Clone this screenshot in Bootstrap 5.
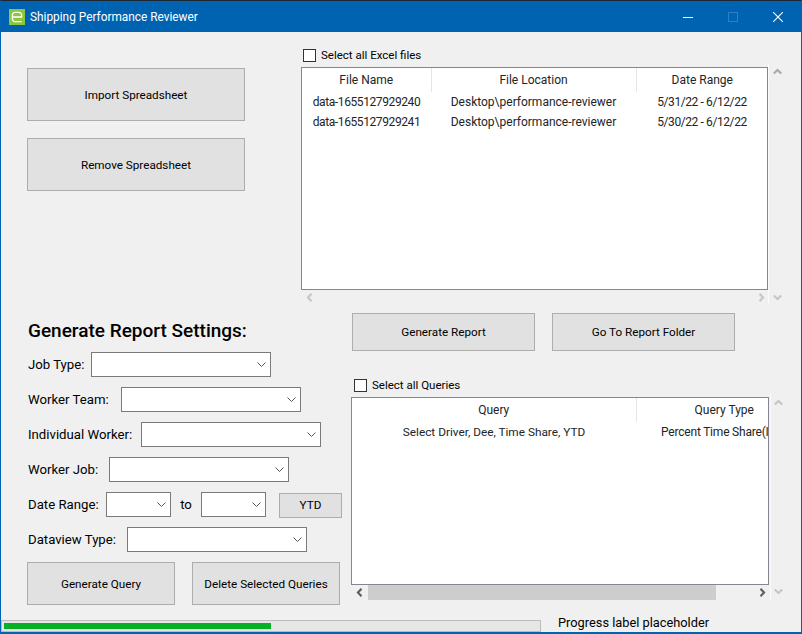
<!DOCTYPE html>
<html lang="en">
<head>
<meta charset="utf-8">
<title>Shipping Performance Reviewer</title>
<link href="https://cdn.jsdelivr.net/npm/bootstrap@5.3.0/dist/css/bootstrap.min.css" rel="stylesheet">
<style>
html,body{margin:0;height:634px;overflow:hidden;background:#f0f0f0}
body{font-family:Roboto,"Noto Sans",sans-serif;font-size:12px;line-height:16px;color:#000}
.app-window{width:802px;height:634px;background:#f0f0f0;border-left:1px solid #0063b1;border-right:1px solid #0063b1;border-bottom:2px solid #0063b1;border-top:1px solid #1b2733;overflow:hidden}
.title-strip{height:31px;margin:0 -1px;background:#0063b1;color:#fff;flex:none}
.app-logo{width:16px;height:16px;margin-left:9px;margin-right:5px}
.title-text{font-size:11.85px}
.win-ctl{width:46px;height:31px}
.ctl-max{width:44px}
.ctl-close{margin-left:-1px}
.ctl-row{margin-right:1px}
.win-btn.btn{background:#e1e1e1;border:1px solid #adadad;border-radius:0;color:#000;font-size:11.7px;line-height:16px;padding:0;display:flex;align-items:center;justify-content:center}
.w-218{width:218px}.h-53{height:53px}
.w-183{width:183px}.h-38{height:38px}
.w-148{width:148px}.h-43{height:43px}
.w-63b{width:63px;height:25px}
.top-zone{height:281px;flex:none}
.left-top{width:218px;margin-left:26px;margin-top:36px;gap:17px}
.right-top{margin-left:56px;margin-top:15px}
.chk-row{height:16px;gap:5px;font-size:11.5px}
.form-check-input.win-chk{width:13px;height:13px;margin:0 0 0 2px;border:1px solid #333;border-radius:0;background-color:#fff;flex:none}
.list-one{width:467px;height:223px;margin-top:4px}
.list-two{width:418px;height:188px;margin-top:4px;margin-left:-1px}
.win-list{background:#fff;border:1px solid #828790;overflow:hidden;flex:none}
.win-table{table-layout:fixed;margin:0;--bs-table-bg:transparent;border-collapse:collapse;font-size:12px}
.win-table th,.win-table td{border:0;padding:0;text-align:center;white-space:nowrap;overflow:hidden;font-weight:400;line-height:16px;box-shadow:none;background:transparent}
.win-table thead th{height:24px;border-right:1px solid #e5e5e5;vertical-align:middle}
.win-table thead th:last-child{border-right:0}
.win-table tbody td{height:20px;vertical-align:middle}
.win-table td.tight-num{letter-spacing:-.4px}
.win-table td.tight-text{font-size:11.8px}
.tbl-one{width:466px}
.c-130{width:129px}.c-205{width:205px}.c-131{width:132px}
.tbl-two{width:460px}
.c-285{width:284px}.c-175{width:176px}
.win-table td.cell-clip{text-align:left;padding-left:25px;letter-spacing:-.2px}
.sb-h{height:15px;flex:none}
.sb-one{width:467px}
.sb-two{width:418px;margin-left:-1px}
.sb-thumb{width:348px;height:15px;background:#cdcdcd;margin-left:5px}
.sb-arrow{width:9px;height:7px;display:block}
.sb-arrow-v{width:7px;height:9px;display:block}
.ar-l{margin-left:5px}
.ar-r{margin-left:auto;margin-right:3px}
.v-col{width:33px;flex:none;border-left:1px solid #fbfbfb}
.v-top{padding:5px 0 0 4px}
.v-bot{padding:0 0 4px 4px;margin-top:auto}
.v-top2{padding:6px 0 0 3px}
.v-bot2{padding:0 0 5px 3px;margin-top:auto}
.ar-path{fill:none;stroke-width:2.2}
.ar-dark{stroke:#606060}
.ar-mid{stroke:#a9a9a9}
.ar-pale{stroke:#c6c6c6}
.mid-zone{flex:1;min-height:0}
.left-form{width:340px;margin-left:27px;margin-top:6px;flex:none}
.form-title{font-size:19px;line-height:24px;font-weight:500;margin:0 0 9px;height:24px}
.form-line{height:25px;margin-bottom:10px;font-size:13.2px}
.lbl-63{width:63px}.lbl-93{width:93px}.lbl-113{width:113px}.lbl-81{width:81px}.lbl-78{width:78px}.lbl-99{width:99px}
.form-select.win-sel{width:180px;height:25px;padding:0 4px;border:1px solid #7a7a7a;border-radius:0;font-size:12px;background-color:#fff;background-image:url("data:image/svg+xml,%3csvg xmlns='http://www.w3.org/2000/svg' viewBox='0 0 9 5'%3e%3cpath d='M.5.5l4 4 4-4' fill='none' stroke='%23555'/%3e%3c/svg%3e");background-position:right 4px center;background-size:9px 5px;flex:none}
.form-select.win-sel-s{width:65px}
.to-lbl{width:30px;text-align:center}
.ytd-gap{margin-left:13px}
.ytd-y{margin-top:1px}
.btn-pair{gap:17px;margin-top:1px;margin-left:-1px;width:320px}
.right-mid{margin-left:-16px}
.btn-duo{gap:17px}
.chk-two{margin-top:26px}
.right-stack{width:418px}
.foot-zone{height:12px;flex:none}
.win-progress.progress{width:540px;height:12px;background:#e6e6e6;border:1px solid #bcbcbc;border-radius:0;padding:2px;flex:none}
.win-progress .progress-bar{background:#06b025;height:6px;width:267px}
.foot-label{margin-left:17px;margin-top:-5px;line-height:16px;font-size:12.8px}
</style>
</head>
<body>
<div class="app-window d-flex flex-column">
  <div class="title-strip d-flex align-items-center">
    <svg class="app-logo" viewBox="0 0 16 16"><rect width="16" height="16" fill="#8cc63f"/><path d="M3.6 8h9V6a2.6 2.6 0 0 0-2.6-2.6H6A2.6 2.6 0 0 0 3.4 6v4A2.6 2.6 0 0 0 6 12.6h6.6" fill="none" stroke="#fff" stroke-width="1.3"/></svg>
    <span class="title-text">Shipping Performance Reviewer</span>
    <div class="d-flex ms-auto ctl-row">
      <div class="win-ctl d-flex align-items-center justify-content-center"><svg width="10" height="10" viewBox="0 0 10 10"><path d="M0 5.5h10" stroke="#fff"/></svg></div>
      <div class="win-ctl ctl-max d-flex align-items-center justify-content-center"><svg width="10" height="10" viewBox="0 0 10 10"><rect x=".5" y=".5" width="9" height="9" fill="none" stroke="#2f7fc4"/></svg></div>
      <div class="win-ctl d-flex align-items-center justify-content-center"><svg width="10" height="10" viewBox="0 0 10 10"><path d="M0 0l10 10M10 0L0 10" stroke="#fff" stroke-width="1.1"/></svg></div>
    </div>
  </div>

  <div class="top-zone d-flex">
    <div class="left-top d-flex flex-column">
      <button class="btn win-btn w-218 h-53" type="button">Import Spreadsheet</button>
      <button class="btn win-btn w-218 h-53" type="button">Remove Spreadsheet</button>
    </div>
    <div class="right-top">
      <div class="chk-row d-flex align-items-center">
        <input class="form-check-input win-chk" type="checkbox" id="allExcel">
        <label for="allExcel">Select all Excel files</label>
      </div>
      <div class="d-flex">
        <div>
          <div class="win-list list-one">
            <table class="table win-table tbl-one">
              <colgroup><col class="c-130"><col class="c-205"><col class="c-131"></colgroup>
              <thead><tr><th>File Name</th><th>File Location</th><th>Date Range</th></tr></thead>
              <tbody>
                <tr><td class="tight-num">data-1655127929240</td><td>Desktop\performance-reviewer</td><td class="tight-num">5/31/22 - 6/12/22</td></tr>
                <tr><td class="tight-num">data-1655127929241</td><td>Desktop\performance-reviewer</td><td class="tight-num">5/30/22 - 6/12/22</td></tr>
              </tbody>
            </table>
          </div>
          <div class="sb-h sb-one d-flex align-items-center">
            <svg class="sb-arrow-v ar-l" viewBox="0 0 7 9"><path class="ar-path ar-pale" d="M5.5 .8L2 4.5l3.5 3.7"/></svg>
            <svg class="sb-arrow-v ar-r" viewBox="0 0 7 9"><path class="ar-path ar-pale" d="M1.5 .8L5 4.5 1.5 8.2"/></svg>
          </div>
        </div>
        <div class="v-col d-flex flex-column">
          <div class="v-top"><svg class="sb-arrow" viewBox="0 0 9 7"><path class="ar-path ar-mid" d="M.8 5.5l3.7-3.5 3.7 3.5"/></svg></div>
          <div class="v-bot"><svg class="sb-arrow" viewBox="0 0 9 7"><path class="ar-path ar-pale" d="M.8 1.5L4.5 5l3.7-3.5"/></svg></div>
        </div>
      </div>
    </div>
  </div>

  <div class="mid-zone d-flex">
    <div class="left-form">
      <h2 class="form-title">Generate Report Settings:</h2>
      <div class="form-line d-flex align-items-center"><span class="lbl-63">Job Type:</span><select class="form-select win-sel" aria-label="Job Type"></select></div>
      <div class="form-line d-flex align-items-center"><span class="lbl-93">Worker Team:</span><select class="form-select win-sel" aria-label="Worker Team"></select></div>
      <div class="form-line d-flex align-items-center"><span class="lbl-113">Individual Worker:</span><select class="form-select win-sel" aria-label="Individual Worker"></select></div>
      <div class="form-line d-flex align-items-center"><span class="lbl-81">Worker Job:</span><select class="form-select win-sel" aria-label="Worker Job"></select></div>
      <div class="form-line d-flex align-items-center"><span class="lbl-78">Date Range:</span><select class="form-select win-sel win-sel-s" aria-label="Date from"></select><span class="to-lbl">to</span><select class="form-select win-sel win-sel-s" aria-label="Date to"></select><button class="btn win-btn w-63b ytd-gap ytd-y" type="button">YTD</button></div>
      <div class="form-line d-flex align-items-center"><span class="lbl-99">Dataview Type:</span><select class="form-select win-sel" aria-label="Dataview Type"></select></div>
      <div class="btn-pair d-flex">
        <button class="btn win-btn w-148 h-43" type="button">Generate Query</button>
        <button class="btn win-btn w-148 h-43" type="button">Delete Selected Queries</button>
      </div>
    </div>
    <div class="right-mid">
      <div class="btn-duo d-flex">
        <button class="btn win-btn w-183 h-38" type="button">Generate Report</button>
        <button class="btn win-btn w-183 h-38" type="button">Go To Report Folder</button>
      </div>
      <div class="chk-row chk-two d-flex align-items-center">
        <input class="form-check-input win-chk" type="checkbox" id="allQueries">
        <label for="allQueries">Select all Queries</label>
      </div>
      <div class="d-flex">
        <div class="right-stack">
          <div class="win-list list-two">
            <table class="table win-table tbl-two">
              <colgroup><col class="c-285"><col class="c-175"></colgroup>
              <thead><tr><th>Query</th><th>Query Type</th></tr></thead>
              <tbody><tr><td class="tight-text">Select Driver, Dee, Time Share, YTD</td><td class="cell-clip">Percent Time Share(Individual)</td></tr></tbody>
            </table>
          </div>
          <div class="sb-h sb-two d-flex align-items-center">
            <svg class="sb-arrow-v ar-l" viewBox="0 0 7 9"><path class="ar-path ar-dark" d="M5.5 .8L2 4.5l3.5 3.7"/></svg>
            <div class="sb-thumb"></div>
            <svg class="sb-arrow-v ar-r" viewBox="0 0 7 9"><path class="ar-path ar-dark" d="M1.5 .8L5 4.5 1.5 8.2"/></svg>
          </div>
        </div>
        <div class="v-col d-flex flex-column">
          <div class="v-top2"><svg class="sb-arrow" viewBox="0 0 9 7"><path class="ar-path ar-pale" d="M.8 5.5l3.7-3.5 3.7 3.5"/></svg></div>
          <div class="v-bot2"><svg class="sb-arrow" viewBox="0 0 9 7"><path class="ar-path ar-pale" d="M.8 1.5L4.5 5l3.7-3.5"/></svg></div>
        </div>
      </div>
    </div>
  </div>

  <div class="foot-zone d-flex">
    <div class="progress win-progress" role="progressbar" aria-label="Progress" aria-valuenow="50" aria-valuemin="0" aria-valuemax="100"><div class="progress-bar"></div></div>
    <span class="foot-label">Progress label placeholder</span>
  </div>
</div>
</body>
</html>
